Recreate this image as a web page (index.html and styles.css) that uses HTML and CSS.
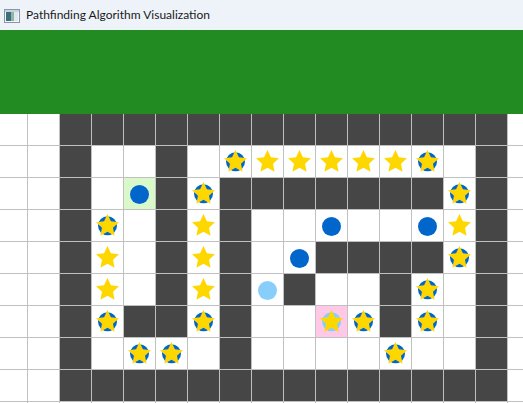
FILE: index.html
```html
<!DOCTYPE html>
<html>
<head>
<meta charset="utf-8">
<title>Pathfinding Algorithm Visualization</title>
<link rel="stylesheet" href="styles.css">
</head>
<body>
<svg class="defs" width="0" height="0" aria-hidden="true">
  <defs>
    <symbol id="star" viewBox="0 0 31 31">
      <polygon fill="#ffd700" points="15.5,4 18.91,11.31 26.91,12.29 21.02,17.79 22.55,25.71 15.5,21.8 8.45,25.71 9.98,17.79 4.09,12.29 12.09,11.31"/>
    </symbol>
    <symbol id="bstar" viewBox="0 0 31 31">
      <circle cx="15.5" cy="15.8" r="9.5" fill="#0066cc"/>
      <polygon fill="#ffd700" points="15.5,4 18.91,11.31 26.91,12.29 21.02,17.79 22.55,25.71 15.5,21.8 8.45,25.71 9.98,17.79 4.09,12.29 12.09,11.31"/>
    </symbol>
    <symbol id="lstar" viewBox="0 0 31 31">
      <circle cx="15.5" cy="15.8" r="9.5" fill="#87cefa"/>
      <polygon fill="#ffd700" points="15.5,4 18.91,11.31 26.91,12.29 21.02,17.79 22.55,25.71 15.5,21.8 8.45,25.71 9.98,17.79 4.09,12.29 12.09,11.31"/>
    </symbol>
  </defs>
</svg>
<div class="frame">
<div class="titlebar">
  <svg class="appicon" width="16" height="14" viewBox="0 0 16 14">
    <rect x="0.5" y="0.5" width="15" height="13" fill="#f4f6f8" stroke="#8a96a3"/>
    <rect x="2" y="3" width="5" height="9" fill="#3d6d7e"/>
    <rect x="7" y="3" width="3" height="9" fill="#8fb7a0"/>
    <rect x="10" y="3" width="4" height="9" fill="#dfe8f0"/>
    <rect x="1" y="1" width="14" height="2" fill="#c9d3dd"/>
  </svg>
  <span class="title">Pathfinding Algorithm Visualization</span>
</div>
<div class="banner"></div>
<div class="grid">
  <!-- row 0 -->
  <div class="c"></div><div class="c"></div><div class="c d"></div><div class="c d"></div><div class="c d"></div><div class="c d"></div><div class="c d"></div><div class="c d"></div><div class="c d"></div><div class="c d"></div><div class="c d"></div><div class="c d"></div><div class="c d"></div><div class="c d"></div><div class="c d"></div><div class="c d"></div><div class="c"></div>
  <!-- row 1 -->
  <div class="c"></div><div class="c"></div><div class="c d"></div><div class="c"></div><div class="c"></div><div class="c d"></div><div class="c"></div>
  <div class="c"><svg class="ic"><use href="#bstar"/></svg></div>
  <div class="c"><svg class="ic"><use href="#star"/></svg></div>
  <div class="c"><svg class="ic"><use href="#star"/></svg></div>
  <div class="c"><svg class="ic"><use href="#star"/></svg></div>
  <div class="c"><svg class="ic"><use href="#star"/></svg></div>
  <div class="c"><svg class="ic"><use href="#star"/></svg></div>
  <div class="c"><svg class="ic"><use href="#bstar"/></svg></div>
  <div class="c"></div><div class="c d"></div><div class="c"></div>
  <!-- row 2 -->
  <div class="c"></div><div class="c"></div><div class="c d"></div><div class="c"></div>
  <div class="c start"><span class="dot"></span></div>
  <div class="c d"></div>
  <div class="c"><svg class="ic"><use href="#bstar"/></svg></div>
  <div class="c d"></div><div class="c d"></div><div class="c d"></div><div class="c d"></div><div class="c d"></div><div class="c d"></div><div class="c d"></div>
  <div class="c"><svg class="ic"><use href="#bstar"/></svg></div>
  <div class="c d"></div><div class="c"></div>
  <!-- row 3 -->
  <div class="c"></div><div class="c"></div><div class="c d"></div>
  <div class="c"><svg class="ic"><use href="#bstar"/></svg></div>
  <div class="c"></div><div class="c d"></div>
  <div class="c"><svg class="ic"><use href="#star"/></svg></div>
  <div class="c d"></div><div class="c"></div><div class="c"></div>
  <div class="c"><span class="dot"></span></div>
  <div class="c"></div><div class="c"></div>
  <div class="c"><span class="dot"></span></div>
  <div class="c"><svg class="ic"><use href="#star"/></svg></div>
  <div class="c d"></div><div class="c"></div>
  <!-- row 4 -->
  <div class="c"></div><div class="c"></div><div class="c d"></div>
  <div class="c"><svg class="ic"><use href="#star"/></svg></div>
  <div class="c"></div><div class="c d"></div>
  <div class="c"><svg class="ic"><use href="#star"/></svg></div>
  <div class="c d"></div><div class="c"></div>
  <div class="c"><span class="dot"></span></div>
  <div class="c d"></div><div class="c d"></div><div class="c d"></div><div class="c d"></div>
  <div class="c"><svg class="ic"><use href="#bstar"/></svg></div>
  <div class="c d"></div><div class="c"></div>
  <!-- row 5 -->
  <div class="c"></div><div class="c"></div><div class="c d"></div>
  <div class="c"><svg class="ic"><use href="#star"/></svg></div>
  <div class="c"></div><div class="c d"></div>
  <div class="c"><svg class="ic"><use href="#star"/></svg></div>
  <div class="c d"></div>
  <div class="c"><span class="dot light"></span></div>
  <div class="c d"></div><div class="c"></div><div class="c"></div><div class="c d"></div>
  <div class="c"><svg class="ic"><use href="#bstar"/></svg></div>
  <div class="c"></div><div class="c d"></div><div class="c"></div>
  <!-- row 6 -->
  <div class="c"></div><div class="c"></div><div class="c d"></div>
  <div class="c"><svg class="ic"><use href="#bstar"/></svg></div>
  <div class="c d"></div><div class="c d"></div>
  <div class="c"><svg class="ic"><use href="#bstar"/></svg></div>
  <div class="c d"></div><div class="c"></div><div class="c"></div>
  <div class="c goal"><svg class="ic"><use href="#lstar"/></svg></div>
  <div class="c"><svg class="ic"><use href="#bstar"/></svg></div>
  <div class="c d"></div>
  <div class="c"><svg class="ic"><use href="#bstar"/></svg></div>
  <div class="c"></div><div class="c d"></div><div class="c"></div>
  <!-- row 7 -->
  <div class="c"></div><div class="c"></div><div class="c d"></div><div class="c"></div>
  <div class="c"><svg class="ic"><use href="#bstar"/></svg></div>
  <div class="c"><svg class="ic"><use href="#bstar"/></svg></div>
  <div class="c"></div><div class="c d"></div><div class="c"></div><div class="c"></div><div class="c"></div><div class="c"></div>
  <div class="c"><svg class="ic"><use href="#bstar"/></svg></div>
  <div class="c"></div><div class="c"></div><div class="c d"></div><div class="c"></div>
  <!-- row 8 -->
  <div class="c"></div><div class="c"></div><div class="c d"></div><div class="c d"></div><div class="c d"></div><div class="c d"></div><div class="c d"></div><div class="c d"></div><div class="c d"></div><div class="c d"></div><div class="c d"></div><div class="c d"></div><div class="c d"></div><div class="c d"></div><div class="c d"></div><div class="c d"></div><div class="c"></div>
  <!-- row 9 -->
  <div class="c"></div><div class="c"></div><div class="c"></div><div class="c"></div><div class="c"></div><div class="c"></div><div class="c"></div><div class="c"></div><div class="c"></div><div class="c"></div><div class="c"></div><div class="c"></div><div class="c"></div><div class="c"></div><div class="c"></div><div class="c"></div><div class="c"></div>
</div>
</div>
</body>
</html>
```

FILE: styles.css
```css
html, body {
  margin: 0;
  padding: 0;
  background: #ffffff;
  overflow: hidden;
}
body {
  width: 523px;
  height: 403px;
  font-family: "Lato", "Noto Sans", sans-serif;
}
.defs {
  position: absolute;
  width: 0;
  height: 0;
}
.frame {
  width: 523px;
  height: 403px;
  overflow: hidden;
}
.titlebar {
  height: 30px;
  background: #eef3f9;
  display: flex;
  align-items: center;
  padding-left: 4px;
  box-sizing: border-box;
}
.appicon {
  display: block;
  margin-top: 1px;
}
.title {
  margin-left: 6px;
  font-size: 12px;
  color: #1a1a1a;
  line-height: 16px;
}
.banner {
  height: 84px;
  background: #228b22;
}
.grid {
  display: grid;
  grid-template-columns: repeat(17, 31px);
  grid-auto-rows: 31px;
  gap: 1px;
  background: #c0c0c0;
  margin-left: -4px;
  width: max-content;
}
.c {
  background: #ffffff;
  display: flex;
  align-items: center;
  justify-content: center;
}
.c.d {
  background: #464646;
}
.c.start {
  background: #d9f9cb;
}
.c.goal {
  background: #ffc8e6;
}
.ic {
  width: 31px;
  height: 31px;
  display: block;
}
.dot {
  width: 19px;
  height: 19px;
  border-radius: 50%;
  background: #0066cc;
  margin-top: 1px;
}
.dot.light {
  background: #87cefa;
}
```
